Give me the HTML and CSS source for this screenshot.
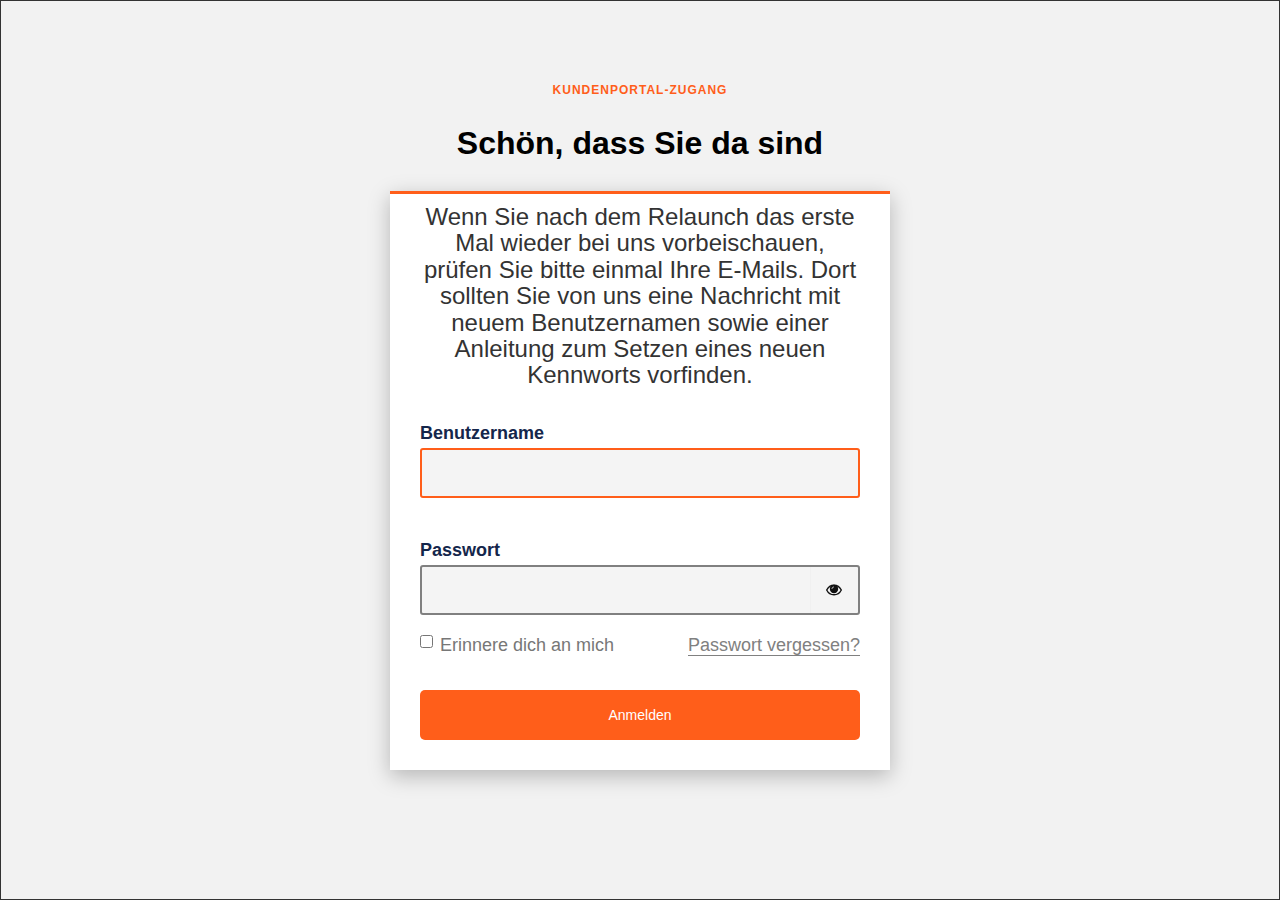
FILE: index.html
```html
<!DOCTYPE html>
<html lang="de">
<head>
  <meta charset="UTF-8">
  <meta name="viewport" content="width=device-width, initial-scale=1.0">
  <title>Kundenportal</title>
  <link rel="stylesheet" href="styles.css">
</head>
<body>
  <main class="login-page">
    <header class="login-header">
      <p class="eyebrow">Kundenportal-Zugang</p>
      <h1>Schön, dass Sie da sind</h1>
    </header>

    <section class="card">
      <p class="intro">Wenn Sie nach dem Relaunch das erste Mal wieder bei uns vorbeischauen, prüfen Sie bitte einmal Ihre E-Mails. Dort sollten Sie von uns eine Nachricht mit neuem Benutzernamen sowie einer Anleitung zum Setzen eines neuen Kennworts vorfinden.</p>

      <form action="#" method="post">
        <div class="form-group">
          <label for="username">Benutzername</label>
          <div class="field field-active">
            <input id="username" name="username" type="text" autocomplete="username">
          </div>
        </div>

        <div class="form-group">
          <label for="password">Passwort</label>
          <div class="field">
            <input id="password" name="password" type="password" autocomplete="current-password">
            <button class="toggle-password" type="button" aria-label="Passwort anzeigen">
              <svg width="16" height="12" viewBox="0 0 16 12" aria-hidden="true">
                <path d="M.7 6C2.200 3 4.800 1.200 8 1.200s5.800 1.800 7.300 4.800C13.800 9 11.200 10.800 8 10.800S2.200 9 .7 6z" fill="none" stroke="#111" stroke-width="1.400"/>
                <circle cx="8" cy="5" r="4.200" fill="#111"/>
                <path d="M5.900 5A2.100 2.100 0 0 1 8 2.900" fill="none" stroke="#f4f4f4" stroke-width=".7"/>
              </svg>
            </button>
          </div>
        </div>

        <div class="form-options">
          <label class="remember" for="remember">
            <input id="remember" name="remember" type="checkbox">
            Erinnere dich an mich
          </label>
          <a class="forgot" href="#">Passwort vergessen?</a>
        </div>

        <button class="submit" type="submit">Anmelden</button>
      </form>
    </section>
  </main>
</body>
</html>
```
FILE: styles.css
```css
* {
  box-sizing: border-box;
}
body {
  margin: 0;
  font-family: Arial, "Liberation Sans", sans-serif;
  font-size: 18px;
  background: #f2f2f2;
  color: #333;
}
.login-page {
  min-height: 100vh;
  padding: 80px 20px;
  border: 1px solid #333;
}
.login-header {
  text-align: center;
}
.eyebrow {
  margin: 0;
  font-size: 12px;
  font-weight: bold;
  line-height: 18px;
  letter-spacing: 1px;
  text-transform: uppercase;
  color: #ff5e1a;
}
h1 {
  margin: 24px 0 28px;
  font-size: 32px;
  line-height: 40px;
  color: #000;
}
.card {
  max-width: 500px;
  margin: 0 auto;
  padding: 10px 30px 30px;
  background: #fff;
  border-top: 3px solid #ff5e1a;
  box-shadow: 0 6px 20px rgba(0, 0, 0, 0.25);
}
.intro {
  margin: 0 0 32px;
  font-size: 24px;
  line-height: 1.1;
  text-align: center;
}
.form-group {
  margin-bottom: 40px;
}
.form-group label {
  display: block;
  margin-bottom: 3px;
  font-weight: bold;
  line-height: 24px;
  color: #14264b;
}
.field {
  display: flex;
  height: 50px;
  border: 2px solid #808080;
  border-radius: 3px;
  background: #f4f4f4;
}
.field-active {
  border-color: #ff5e1a;
}
.field input {
  flex: 1;
  min-width: 0;
  padding: 0 10px;
  border: 0;
  outline: 0;
  background: transparent;
  font: inherit;
}
.toggle-password {
  display: flex;
  align-items: center;
  justify-content: center;
  width: 48px;
  padding: 0;
  border: 0;
  box-shadow: inset 1px 0 #f0f0f0;
  background: transparent;
  cursor: pointer;
}
.form-options {
  display: flex;
  justify-content: space-between;
  margin: -20px 0 34px;
  line-height: 20px;
  color: #777;
}
.remember {
  display: flex;
  align-items: flex-start;
  gap: 7px;
}
.remember input {
  width: 13px;
  height: 13px;
  margin: 0;
}
.forgot {
  color: #808080;
  text-decoration: none;
  border-bottom: 1px solid #808080;
}
.submit {
  display: block;
  width: 100%;
  height: 50px;
  border: 0;
  border-radius: 5px;
  background: #ff5e1a;
  color: #fff;
  font-family: inherit;
  font-size: 14px;
  cursor: pointer;
}
```
